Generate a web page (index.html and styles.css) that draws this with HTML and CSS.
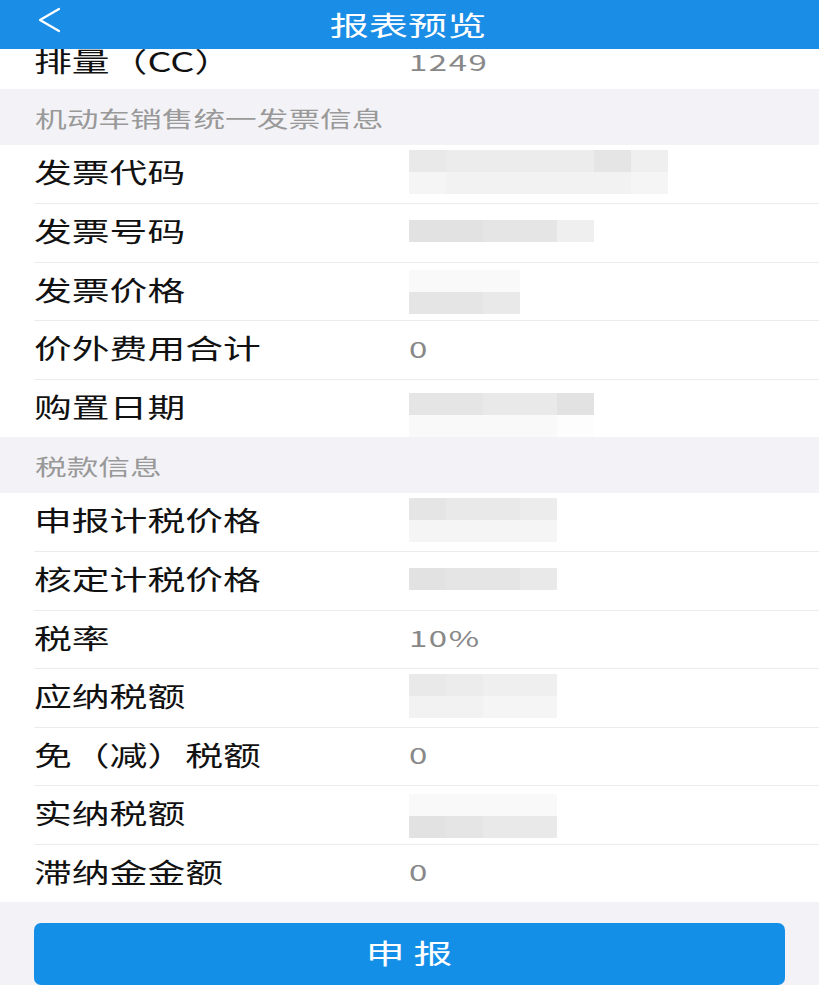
FILE: index.html
```html
<!DOCTYPE html>
<html lang="zh-CN">
<head>
  <meta charset="UTF-8">
  <meta name="viewport" content="width=device-width, initial-scale=1.0">
  <title>报表预览</title>
  <link rel="stylesheet" href="styles.css">
</head>
<body>

<div id="header">
  <span class="back">
    <svg width="24" height="28" viewBox="0 0 24 28"><polyline points="21,2 2,13 21,24" fill="none" stroke="#fff" stroke-width="2.2" stroke-linecap="round" stroke-linejoin="round"/></svg>
  </span>
  <h1>报表预览</h1>
</div>

<div id="content">
  <div class="group">
    <div class="row first"><span class="label">排量（CC）</span><span class="value">1249</span></div>
  </div>

  <div class="section"><span class="wide">机动车销售统一发票信息</span></div>
  <div class="group">
    <div class="row">
      <span class="label">发票代码</span>
      <span class="mosaic cols7">
        <i class="g3"></i><i class="g4"></i><i class="g4"></i><i class="g4"></i><i class="g4"></i><i class="g2"></i><i class="g5"></i>
        <i class="g7"></i><i class="g6"></i><i class="g6"></i><i class="g6"></i><i class="g6"></i><i class="g6"></i><i class="g7"></i>
      </span>
    </div>
    <div class="row">
      <span class="label">发票号码</span>
      <span class="mosaic cols5">
        <i class="g1"></i><i class="g1"></i><i class="g2"></i><i class="g2"></i><i class="g5"></i>
      </span>
    </div>
    <div class="row">
      <span class="label">发票价格</span>
      <span class="mosaic cols3 low">
        <i class="g8"></i><i class="g8"></i><i class="g8"></i>
        <i class="g2"></i><i class="g2"></i><i class="g3"></i>
      </span>
    </div>
    <div class="row"><span class="label">价外费用合计</span><span class="value">0</span></div>
    <div class="row">
      <span class="label">购置日期</span>
      <span class="mosaic cols5 high">
        <i class="g2"></i><i class="g2"></i><i class="g3"></i><i class="g3"></i><i class="g1"></i>
        <i class="g8"></i><i class="g8"></i><i class="g8"></i><i class="g8"></i><i class="g9"></i>
      </span>
    </div>
  </div>

  <div class="section"><span class="wide">税款信息</span></div>
  <div class="group">
    <div class="row">
      <span class="label">申报计税价格</span>
      <span class="mosaic cols4">
        <i class="g2"></i><i class="g3"></i><i class="g3"></i><i class="g4"></i>
        <i class="g7"></i><i class="g7"></i><i class="g7"></i><i class="g7"></i>
      </span>
    </div>
    <div class="row">
      <span class="label">核定计税价格</span>
      <span class="mosaic cols4">
        <i class="g1"></i><i class="g2"></i><i class="g2"></i><i class="g3"></i>
      </span>
    </div>
    <div class="row"><span class="label">税率</span><span class="value">10%</span></div>
    <div class="row">
      <span class="label">应纳税额</span>
      <span class="mosaic cols4">
        <i class="g3"></i><i class="g4"></i><i class="g5"></i><i class="g5"></i>
        <i class="g6"></i><i class="g6"></i><i class="g7"></i><i class="g7"></i>
      </span>
    </div>
    <div class="row"><span class="label">免（减）税额</span><span class="value">0</span></div>
    <div class="row">
      <span class="label">实纳税额</span>
      <span class="mosaic cols4 low">
        <i class="g8"></i><i class="g8"></i><i class="g8"></i><i class="g8"></i>
        <i class="g1"></i><i class="g2"></i><i class="g3"></i><i class="g3"></i>
      </span>
    </div>
    <div class="row"><span class="label">滞纳金金额</span><span class="value">0</span></div>
  </div>

  <div id="footer">
    <button class="btn"><span class="wide">申 报</span></button>
  </div>
</div>

</body>
</html>
```

FILE: styles.css
```css
body {
  margin: 0;
  width: 819px;
  height: 985px;
  overflow: hidden;
  background-color: #f3f3f7;
  font-family: "Noto Sans CJK SC", "Noto Sans", sans-serif;
}
#header {
  height: 49px;
  background-color: #1a8de6;
  display: flex;
  align-items: center;
  justify-content: center;
  position: relative;
  z-index: 1;
}
#header h1 {
  margin: 0 0 0 -4px;
  color: #fff;
  font-size: 27px;
  font-weight: normal;
  transform: scaleX(1.45);
}
.back {
  position: absolute;
  left: 38px;
  top: 7px;
}
.group {
  background-color: #fff;
  padding-left: 34px;
}
.row {
  height: 58.5px;
  display: flex;
  align-items: center;
  box-sizing: border-box;
  padding-bottom: 4px;
}
.row + .row {
  border-top: 1px solid #ececec;
}
.row.first {
  height: 40px;
  padding: 0;
  align-items: flex-start;
}
.row.first .label,
.row.first .value {
  line-height: 24px;
}
.label {
  color: #111;
  font-size: 27px;
}
.label,
.value,
.wide {
  display: inline-block;
  transform-origin: left center;
}
.label {
  transform: scaleX(1.4);
  width: 268px;
  margin-right: 107px;
}
.value {
  color: #888;
  font-size: 22px;
  letter-spacing: 1px;
  transform: scaleX(1.5);
}
.section {
  height: 55.5px;
  box-sizing: border-box;
  padding-left: 35px;
  display: flex;
  align-items: center;
  color: #999;
  font-size: 22px;
}
.section .wide {
  transform: scaleX(1.44);
}
.mosaic {
  display: grid;
  grid-auto-rows: 22px;
}
.mosaic i {
  display: block;
}
.cols3 { grid-template-columns: repeat(3, 37px); }
.cols4 { grid-template-columns: repeat(4, 37px); }
.cols5 { grid-template-columns: repeat(5, 37px); }
.cols7 { grid-template-columns: repeat(7, 37px); }
.low { margin-top: 6px; }
.high { margin-top: 18px; }
.g1 { background-color: #e2e2e2; }
.g2 { background-color: #e5e5e5; }
.g3 { background-color: #e9e9e9; }
.g4 { background-color: #ececec; }
.g5 { background-color: #efefef; }
.g6 { background-color: #f2f2f2; }
.g7 { background-color: #f5f5f5; }
.g8 { background-color: #f9f9f9; }
.g9 { background-color: #fdfdfd; }
#footer {
  padding: 21px 34px 0 34px;
}
.btn {
  width: 751px;
  height: 62px;
  border: none;
  border-radius: 7px;
  background-color: #148fe8;
  color: #fff;
  font-family: "Noto Sans CJK SC", sans-serif;
  font-size: 27px;
  padding: 0 0 4px 0;
}
.btn .wide {
  transform: scaleX(1.44);
  transform-origin: center;
}
```
